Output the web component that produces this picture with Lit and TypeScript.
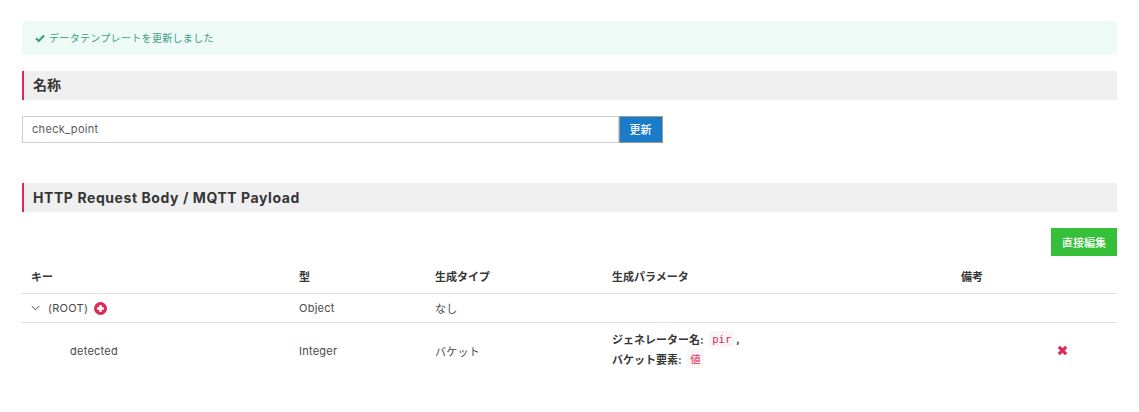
import { LitElement, html, css } from "lit";
import { customElement } from "lit/decorators.js";

@customElement("app-root")
export class AppRoot extends LitElement {
  static styles = css`
    :host { display: block; box-sizing: border-box; height: 412px; padding: 21px 22px 0 22px; background: #fff; color: #4a4a4a;
      font-family: Inter, "Noto Sans CJK JP", sans-serif; font-size: 11px; overflow: hidden; }
    * { box-sizing: border-box; }
    .alert { height: 34px; background: #eefaf6; border-radius: 4px; color: #3f9a82; display: flex; align-items: center; gap: 4px; padding-left: 13px; font-size: 10px; letter-spacing: 0.32px; padding-bottom: 1px; }
    .alert svg { width: 10px; height: 10px; }
    .head { height: 29px; background: #efefef; border-left: 2px solid #dc2a56; display: flex; align-items: center; padding-left: 9px; font-size: 14px; font-weight: 700; color: #363636; }
    .h1 { margin-top: 16px; padding-bottom: 4px; }
    .h2 { margin-top: 40px; letter-spacing: 0.57px; }
    .field { display: flex; margin-top: 16px; height: 27px; width: 641px; }
    .input { flex: 1; border: 1px solid #cfcfcf; display: flex; align-items: center; padding-left: 9px; font-size: 11px; color: #5a5a5a; letter-spacing: 0.32px; padding-bottom: 1px; }
    .upd { width: 44px; background: #1a7cc8; border: 1px solid #9a9a9a; color: #fff; display: flex; align-items: center; justify-content: center; font-size: 11px; font-weight: 500; padding-right: 1px; padding-bottom: 1px; }
    .tools { display: flex; justify-content: flex-end; margin-top: 16px; }
    .edit { width: 66px; height: 28px; background: #36c03a; color: #fff; display: flex; align-items: center; justify-content: center; font-size: 11px; font-weight: 500; }
    .row { display: grid; grid-template-columns: 268px 136px 177px 349px 1fr; border-bottom: 1px solid #dfdfdf; align-items: center; }
    .row > div { padding-left: 9px; }
    .th { height: 38px; padding-top: 3px; font-weight: 700; font-size: 11px; color: #363636; }
    .tr { height: 29px; letter-spacing: 0.25px; }
    .tr3 { height: 55px; border-bottom: none; letter-spacing: 0.25px; }
    .key { display: flex; align-items: center; }
    .chev { width: 9px; height: 6px; margin-right: 8px; }
    .plus { width: 13px; height: 13px; margin-left: 6px; }
    .indent { padding-left: 48px !important; }
    .params { font-weight: 700; font-size: 11px; color: #363636; display: flex; flex-direction: column; letter-spacing: 0; padding-bottom: 4px; }
    .params > span { display: flex; align-items: center; height: 20px; white-space: pre; }
    code { font-family: "DejaVu Sans Mono", "Noto Sans CJK JP", monospace; font-weight: 400; font-size: 10.5px; color: #dc2a56; background: #f9f4f5; border-radius: 3px; padding: 2px 3px; margin-left: 3px; margin-right: 2px; }
    .x { display: flex; justify-content: flex-end; padding-right: 49px; }
    .x svg { width: 11px; height: 11px; }
  `;

  render() {
    return html`
      <div class="alert">
        <svg viewBox="0 0 12 12"><path d="M1.2 6.4 L4.5 9.6 L10.8 3" fill="none" stroke="#3f9a82" stroke-width="2.6"/></svg>
        データテンプレートを更新しました
      </div>
      <div class="head h1">名称</div>
      <div class="field">
        <div class="input">check_point</div>
        <div class="upd">更新</div>
      </div>
      <div class="head h2">HTTP Request Body / MQTT Payload</div>
      <div class="tools"><div class="edit">直接編集</div></div>
      <div class="row th">
        <div>キー</div><div>型</div><div>生成タイプ</div><div>生成パラメータ</div><div>備考</div>
      </div>
      <div class="row tr">
        <div class="key">
          <svg class="chev" viewBox="0 0 9 6"><path d="M0.7 1 L4.5 4.8 L8.3 1" fill="none" stroke="#4a4a4a" stroke-width="1"/></svg>
          (ROOT)
          <svg class="plus" viewBox="0 0 13 13"><circle cx="6.5" cy="6.5" r="6.5" fill="#dc2a56"/><path d="M6.5 3v7M3 6.5h7" stroke="#fff" stroke-width="2.4"/></svg>
        </div>
        <div>Object</div><div>なし</div><div></div><div></div>
      </div>
      <div class="row tr3">
        <div class="indent">detected</div><div>Integer</div><div>バケット</div>
        <div class="params">
          <span>ジェネレーター名: <code>pir</code>,</span>
          <span>バケット要素: <code>値</code></span>
        </div>
        <div class="x"><svg viewBox="0 0 11 11"><path d="M1.8 1.8 L9.2 9.2 M9.2 1.8 L1.8 9.2" stroke="#dc2a56" stroke-width="3.2"/></svg></div>
      </div>
    `;
  }
}
